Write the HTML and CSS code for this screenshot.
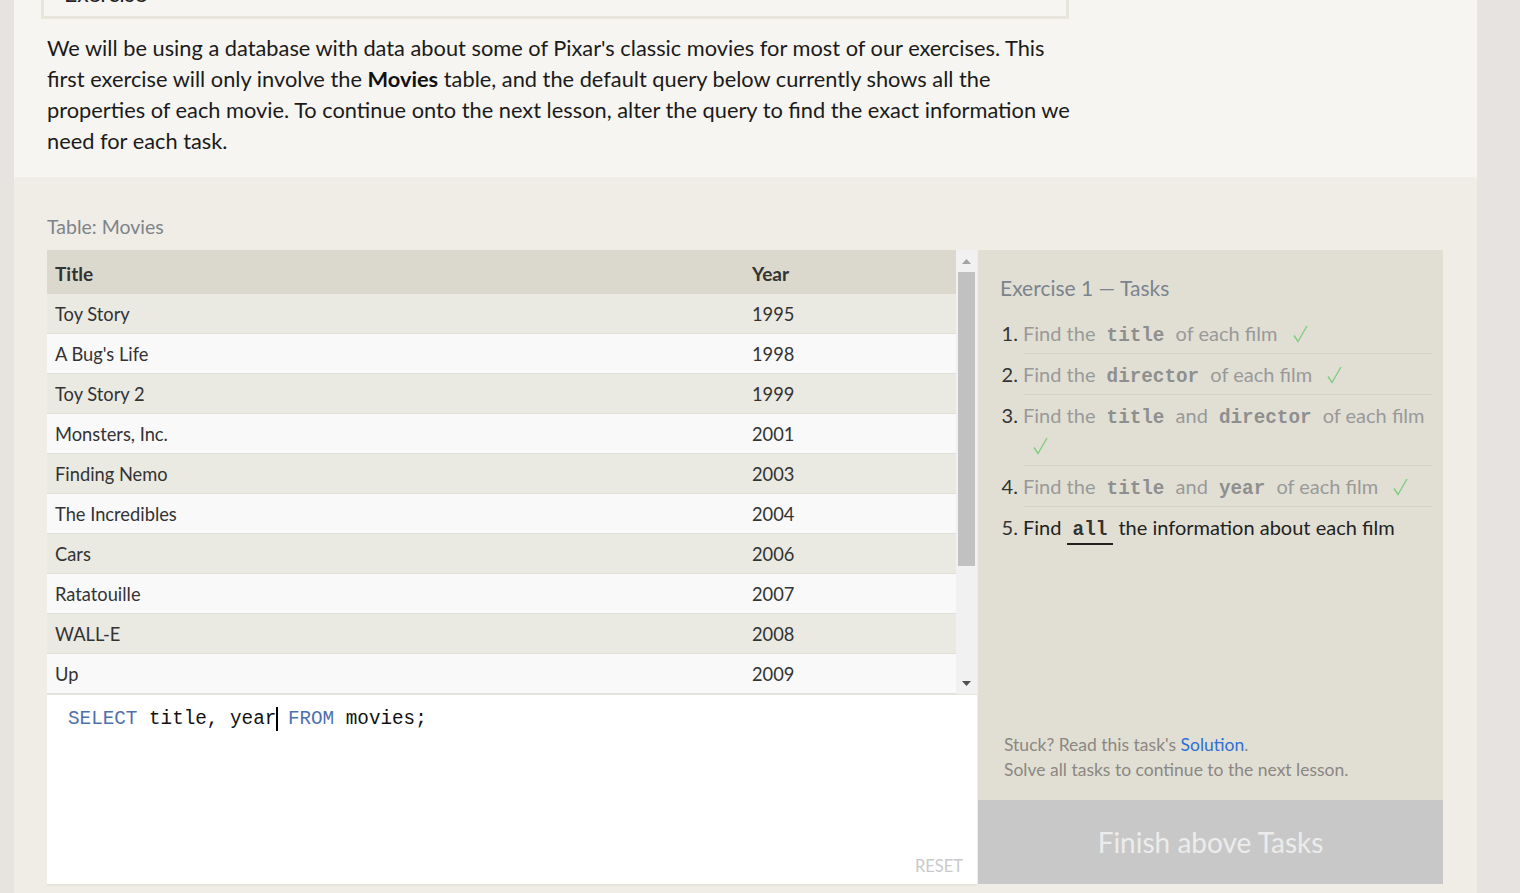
FILE: index.html
```html
<!DOCTYPE html>
<html lang="en">
<head>
<meta charset="utf-8">
<title>SQL Lesson 1: SELECT queries</title>
<link rel="stylesheet" href="styles.css">
</head>
<body>
<div class="page">
  <div class="intro">
    <div class="exercise-box"><h3 class="exercise-title">Exercise</h3></div>
    <p class="intro-text">We will be using a database with data about some of Pixar's classic movies for most of our exercises. This first exercise will only involve the <strong>Movies</strong> table, and the default query below currently shows all the properties of each movie. To continue onto the next lesson, alter the query to find the exact information we need for each task.</p>
  </div>
  <div class="workspace">
    <div class="table-label">Table: Movies</div>
    <div class="work-grid">
      <div class="left-col">
        <div class="table-wrap">
          <div class="table-scroll">
            <table class="movies">
              <thead><tr><th class="col-title">Title</th><th>Year</th></tr></thead>
              <tbody>
                <tr><td>Toy Story</td><td>1995</td></tr>
                <tr><td>A Bug's Life</td><td>1998</td></tr>
                <tr><td>Toy Story 2</td><td>1999</td></tr>
                <tr><td>Monsters, Inc.</td><td>2001</td></tr>
                <tr><td>Finding Nemo</td><td>2003</td></tr>
                <tr><td>The Incredibles</td><td>2004</td></tr>
                <tr><td>Cars</td><td>2006</td></tr>
                <tr><td>Ratatouille</td><td>2007</td></tr>
                <tr><td>WALL-E</td><td>2008</td></tr>
                <tr><td>Up</td><td>2009</td></tr>
              </tbody>
            </table>
          </div>
          <div class="scrollbar">
            <svg class="arrow" width="21" height="18" viewBox="0 0 21 18"><polygon points="6,14 15,14 10.5,9" fill="#a3a3a3"/></svg>
            <div class="track"><div class="thumb"></div></div>
            <svg class="arrow" width="21" height="18" viewBox="0 0 21 18"><polygon points="6,5 15,5 10.5,10" fill="#505050"/></svg>
          </div>
        </div>
        <div class="editor">
          <div class="code"><span class="kw">SELECT</span> title, year<span class="caret"></span> <span class="kw">FROM</span> movies;</div>
          <div class="reset">RESET</div>
        </div>
      </div>
      <div class="tasks-panel">
        <div class="tasks-body">
          <h4 class="tasks-title">Exercise 1 — Tasks</h4>
          <ol class="tasks">
            <li class="done">Find the <code>title</code> of each film <svg class="check" width="15" height="18" viewBox="0 0 15 18"><polyline points="1,10.5 5,16.5 14,1" fill="none" stroke="#80cc80" stroke-width="1.4"/></svg></li>
            <li class="done">Find the <code>director</code> of each film <svg class="check" width="15" height="18" viewBox="0 0 15 18"><polyline points="1,10.5 5,16.5 14,1" fill="none" stroke="#80cc80" stroke-width="1.4"/></svg></li>
            <li class="done">Find the <code>title</code> and <code>director</code> of each film <svg class="check" width="15" height="18" viewBox="0 0 15 18"><polyline points="1,10.5 5,16.5 14,1" fill="none" stroke="#80cc80" stroke-width="1.4"/></svg></li>
            <li class="done">Find the <code>title</code> and <code>year</code> of each film <svg class="check" width="15" height="18" viewBox="0 0 15 18"><polyline points="1,10.5 5,16.5 14,1" fill="none" stroke="#80cc80" stroke-width="1.4"/></svg></li>
            <li class="current">Find <code class="active">all</code> the information about each film</li>
          </ol>
        </div>
        <div class="hint">
          <div>Stuck? Read this task's <a class="solution" href="#">Solution</a>.</div>
          <div>Solve all tasks to continue to the next lesson.</div>
        </div>
        <div class="finish">Finish above Tasks</div>
      </div>
    </div>
  </div>
</div>
</body>
</html>
```

FILE: styles.css
```css
html, body {
  margin: 0;
  padding: 0;
}
body {
  background: #e7e3e0;
  font-family: Lato, "Noto Sans", sans-serif;
  height: 893px;
  overflow: hidden;
}
.page {
  width: 1463px;
  margin-left: 14px;
  background: #f6f5f1;
  min-height: 893px;
}
.intro {
  padding: 0 33px 0 27px;
}
.exercise-box {
  width: 1022px;
  height: 16px;
  border: 3px solid #e8e6dc;
  border-top: 0;
  overflow: hidden;
}
.exercise-title {
  margin: -22px 0 0 20px;
  font-size: 23px;
  font-weight: normal;
  line-height: 30px;
  color: #222;
}
.intro-text {
  margin: 13px 0 0 6px;
  width: 1025px;
  padding-bottom: 21px;
  font-size: 21.8px;
  line-height: 31px;
  color: #1b1b1b;
}
.intro-text strong {
  font-weight: bold;
  color: #111;
}
.workspace {
  background: #efede6;
  border-radius: 4px 4px 0 0;
  padding: 37px 34px 7px 33px;
}
.table-label {
  font-size: 19.5px;
  line-height: 26px;
  color: #7f8489;
  margin-bottom: 10px;
}
.work-grid {
  display: flex;
  align-items: flex-start;
  gap: 1px;
  height: 636px;
}
.left-col {
  width: 930px;
  height: 636px;
  display: flex;
  flex-direction: column;
}
.table-wrap {
  display: flex;
  height: 444px;
  border-bottom: 1px solid #e6e4dc;
}
.table-scroll {
  width: 909px;
  overflow: hidden;
}
.movies {
  width: 909px;
  border-collapse: collapse;
  font-size: 18.3px;
  color: #333;
}
.movies th {
  background: #dbd9cd;
  height: 44px;
  box-sizing: border-box;
  text-align: left;
  padding: 3px 8px 0;
  font-size: 19px;
  font-weight: bold;
  color: #333;
}
.movies th.col-title {
  width: 697px;
}
.movies td {
  height: 39px;
  padding: 0 8px;
  border-bottom: 1px solid #e0dfd8;
}
.movies tbody tr:nth-child(odd) td {
  background: #eae9e2;
}
.movies tbody tr:nth-child(even) td {
  background: #f9f9f9;
}
.scrollbar {
  width: 21px;
  background: #f1f1f1;
  display: flex;
  flex-direction: column;
}
.arrow {
  display: block;
  flex: none;
}
.track {
  flex: 1;
  padding: 4px 2px 0;
}
.thumb {
  height: 294px;
  background: #c1c1c1;
}
.editor {
  flex: 1;
  background: #fff;
  border-bottom: 2px solid #e6e4da;
  display: flex;
  flex-direction: column;
  justify-content: space-between;
  padding: 12px 14px 8px 21px;
}
.code {
  font-family: "Liberation Mono", "DejaVu Sans Mono", monospace;
  font-size: 19.3px;
  line-height: 24px;
  color: #111;
}
.code .kw {
  color: #4f6fae;
}
.caret {
  display: inline-block;
  width: 2px;
  height: 24px;
  background: #000;
  vertical-align: top;
  margin-right: -2px;
}
.reset {
  align-self: flex-end;
  font-size: 16.5px;
  color: #c9c9c9;
}
.tasks-panel {
  width: 465px;
  height: 634px;
  background: #e1dfd4;
  display: flex;
  flex-direction: column;
}
.tasks-body {
  flex: 1;
  padding: 25px 11px 0 22px;
}
.tasks-title {
  margin: 0 0 12px;
  font-size: 21px;
  font-weight: normal;
  line-height: 26px;
  color: #7b848d;
}
.tasks {
  margin: 0;
  padding-left: 23px;
  font-size: 20px;
  line-height: 30px;
  color: #999;
}
.tasks li {
  padding: 5px 0;
  border-bottom: 1px solid #d6d4c9;
}
.tasks li::marker {
  color: #333;
}
.tasks li:last-child {
  border-bottom: 0;
}
.tasks li.current {
  color: #222;
}
.tasks code {
  font-family: "Liberation Mono", "DejaVu Sans Mono", monospace;
  font-weight: bold;
  font-size: 19.3px;
  line-height: 1;
  padding: 0 6px;
  color: #8f8f8f;
}
.tasks code.active {
  color: #333;
  border-bottom: 2px solid #222;
  padding-bottom: 2px;
}
.check {
  margin-left: 10px;
  vertical-align: -2px;
}
.hint {
  padding: 0 20px 18px 26px;
  font-size: 17.5px;
  line-height: 25px;
  color: #8b8782;
}
.solution {
  color: #2f6fd6;
  text-decoration: none;
}
.finish {
  height: 84px;
  background: #c8c8c8;
  color: #ececec;
  font-size: 28px;
  display: flex;
  align-items: center;
  justify-content: center;
}
```
